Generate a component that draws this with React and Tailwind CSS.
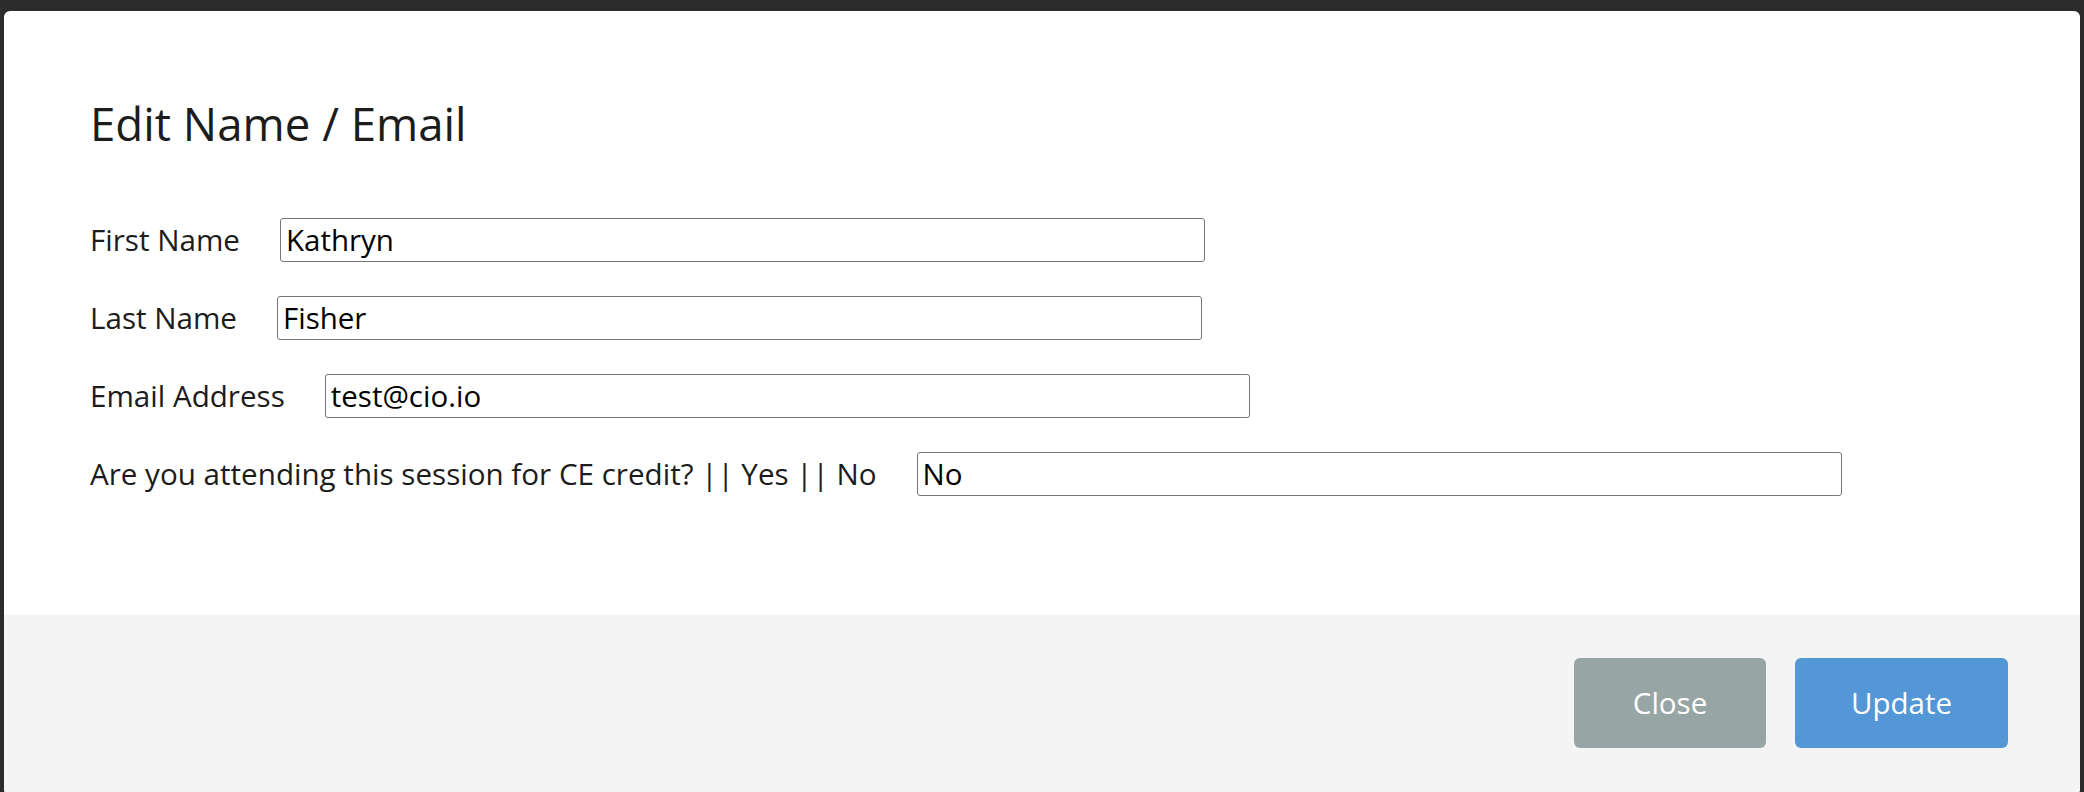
import React from "react";

const font = { fontFamily: '"Open Sans", "Noto Sans", sans-serif' };

function Row({ label, value }) {
  return (
    <div className="flex items-center h-[44px]">
      <label className="text-[29.6px] leading-[44px] text-[#1c1c1c] whitespace-nowrap">{label}</label>
      <input
        type="text"
        defaultValue={value}
        className="ml-[40px] w-[925px] h-[44px] border border-[#757575] rounded-[3px] pl-[5px] text-[29.5px] leading-[44px] text-black bg-white outline-none"
        style={font}
      />
    </div>
  );
}

export default function App() {
  return (
    <div className="w-[2084px] h-[792px] overflow-hidden bg-[#2c2c2c]" style={font}>
      <div className="ml-[4px] mt-[11px] w-[2076px] h-[784px] rounded-[6px] bg-white flex flex-col overflow-hidden">
        <div className="pt-[82px] pb-[119px] pl-[86px] h-[604px]">
          <h2 className="text-[45.6px] leading-[60px] text-[#1c1c1c] font-normal mb-[65px]">Edit Name / Email</h2>
          <div className="flex flex-col gap-[34px]">
            <Row label="First Name" value="Kathryn" />
            <Row label="Last Name" value="Fisher" />
            <Row label="Email Address" value="test@cio.io" />
            <Row label="Are you attending this session for CE credit? || Yes || No" value="No" />
          </div>
        </div>
        <div className="flex-1 bg-[#f4f4f4] flex justify-end items-start pt-[43px] pr-[72px] gap-[29px]">
          <button className="w-[192px] h-[90px] rounded-[6px] bg-[#98a5a5] text-white text-[29.5px]">Close</button>
          <button className="w-[213px] h-[90px] rounded-[6px] bg-[#5397d6] text-white text-[29.5px]">Update</button>
        </div>
      </div>
    </div>
  );
}
